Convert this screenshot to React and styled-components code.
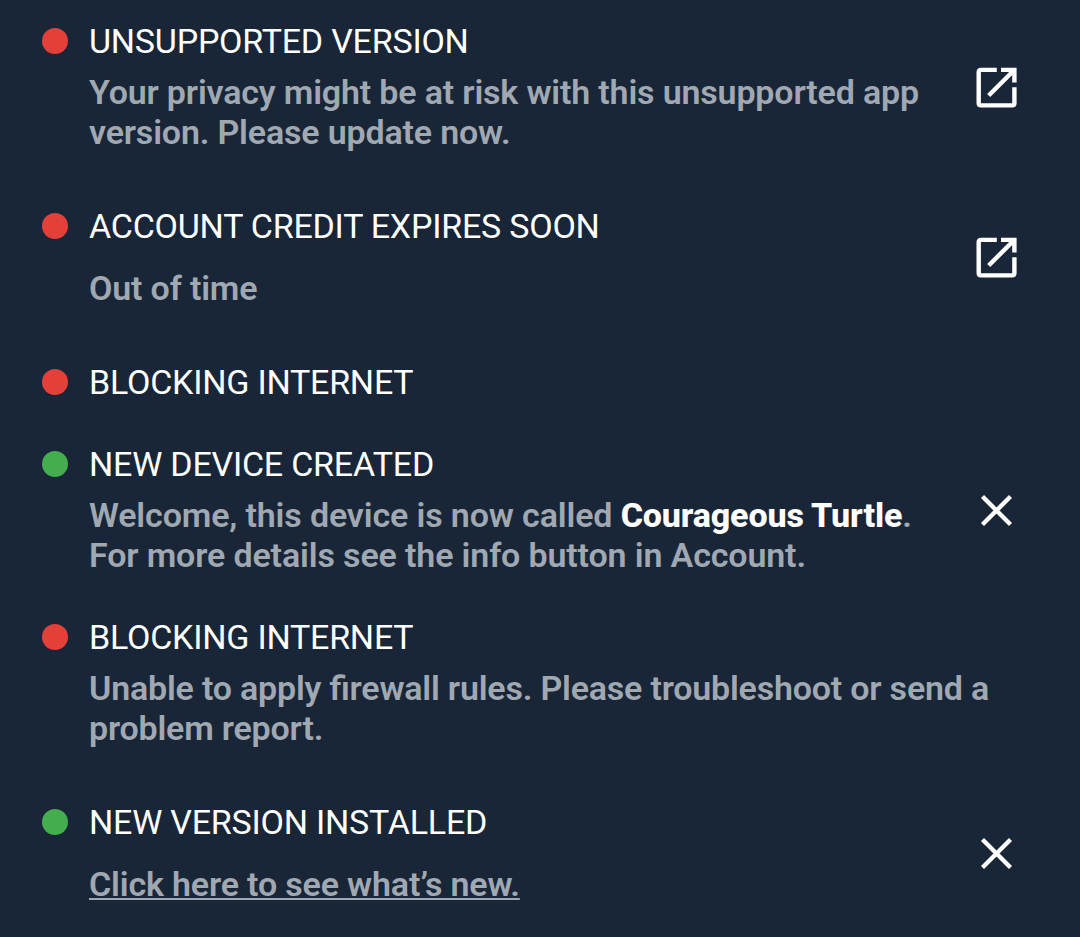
import React from "react";
import styled, { createGlobalStyle } from "styled-components";

const GlobalStyle = createGlobalStyle`
  body { margin: 0; background: #192638; font-family: Roboto, sans-serif; }
`;

const List = styled.main`
  display: flex;
  flex-direction: column;
  width: 1080px;
  height: 937px;
  overflow: hidden;
  box-sizing: border-box;
  background: #192638;
`;

const Banner = styled.section`
  display: grid;
  grid-template-columns: 26px 1fr 42px;
  height: ${(p) => p.$height}px;
  flex: none;
  box-sizing: border-box;
  padding: 0 62px 0 42px;
`;

const Dot = styled.span`
  width: 26px;
  height: 26px;
  margin-top: 28px;
  border-radius: 50%;
  background: ${(p) => (p.$tone === "ok" ? "#44ad4d" : "#e34039")};
`;

const Content = styled.div`
  padding: 21px 0 0 21px;
  white-space: nowrap;
`;

const Title = styled.h2`
  margin: 0;
  color: #fff;
  font-size: 34px;
  font-weight: 400;
  line-height: 40px;
  letter-spacing: -0.22px;
`;

const Message = styled.p`
  margin: ${(p) => (p.$spaced ? 22 : 11)}px 0 0;
  color: #a0a8b2;
  font-size: 34px;
  font-weight: 600;
  line-height: 40px;
  letter-spacing: ${(p) => p.$spacing ?? -0.17}px;
  font-feature-settings: "liga" 1;
`;

const Line = styled.span`
  display: block;
`;

const Strong = styled.strong`
  color: #fff;
  font-weight: 800;
`;

const Link = styled.a`
  text-decoration: underline;
  text-decoration-thickness: 2px;
  text-underline-offset: 2px;
  text-decoration-skip-ink: none;
`;

const Action = styled.button`
  display: flex;
  width: 42px;
  height: 42px;
  margin-top: ${(p) => p.$top}px;
  padding: 0;
  border: 0;
  background: none;
  color: #fff;
`;

const OpenIcon = () => (
  <svg width="42" height="42" viewBox="0 0 42 42" fill="none" stroke="currentColor" strokeWidth="4.4">
    <path d="M20.8 2.9H5Q2.7 2.9 2.7 5.2V36.1Q2.7 38.4 5 38.4H36.1Q38.4 38.4 38.4 36.1V20.3M25 2.9H38.4V15.6M38 3.2L12.7 28.5" />
  </svg>
);

const CloseIcon = () => (
  <svg width="42" height="42" viewBox="0 0 42 42" fill="none" stroke="currentColor" strokeWidth="4.3">
    <path d="M6.5 6.5L34.5 34.5M34.5 6.5L6.5 34.5" />
  </svg>
);

const banners = [
  { title: "UNSUPPORTED VERSION", height: 185, icon: "open", top: 67, lines: ["Your privacy might be at risk with this unsupported app", "version. Please update now."] },
  { title: "ACCOUNT CREDIT EXPIRES SOON", height: 156, icon: "open", top: 52, spaced: true, lines: ["Out of time"] },
  { title: "BLOCKING INTERNET", height: 82 },
  { title: "NEW DEVICE CREATED", height: 173, tone: "ok", icon: "close", top: 67, spacing: -0.14, lines: [<>Welcome, this device is now called <Strong>Courageous Turtle</Strong>.</>, "For more details see the info button in Account."] },
  { title: "BLOCKING INTERNET", height: 185, spacing: -0.2, lines: ["Unable to apply firewall rules. Please troubleshoot or send a", "problem report."] },
  { title: "NEW VERSION INSTALLED", height: 156, tone: "ok", icon: "close", top: 52, spaced: true, lines: [<Link>Click here to see what’s new.</Link>] },
];

export default function App() {
  return (
    <>
      <GlobalStyle />
      <List>
        {banners.map((b, i) => (
          <Banner key={i} $height={b.height}>
            <Dot $tone={b.tone} />
            <Content>
              <Title>{b.title}</Title>
              {b.lines && (
                <Message $spaced={b.spaced} $spacing={b.spacing}>
                  {b.lines.map((line, n) => <Line key={n}>{line}</Line>)}
                </Message>
              )}
            </Content>
            {b.icon && (
              <Action $top={b.top} aria-label={b.icon === "open" ? "Open" : "Dismiss"}>
                {b.icon === "open" ? <OpenIcon /> : <CloseIcon />}
              </Action>
            )}
          </Banner>
        ))}
      </List>
    </>
  );
}
